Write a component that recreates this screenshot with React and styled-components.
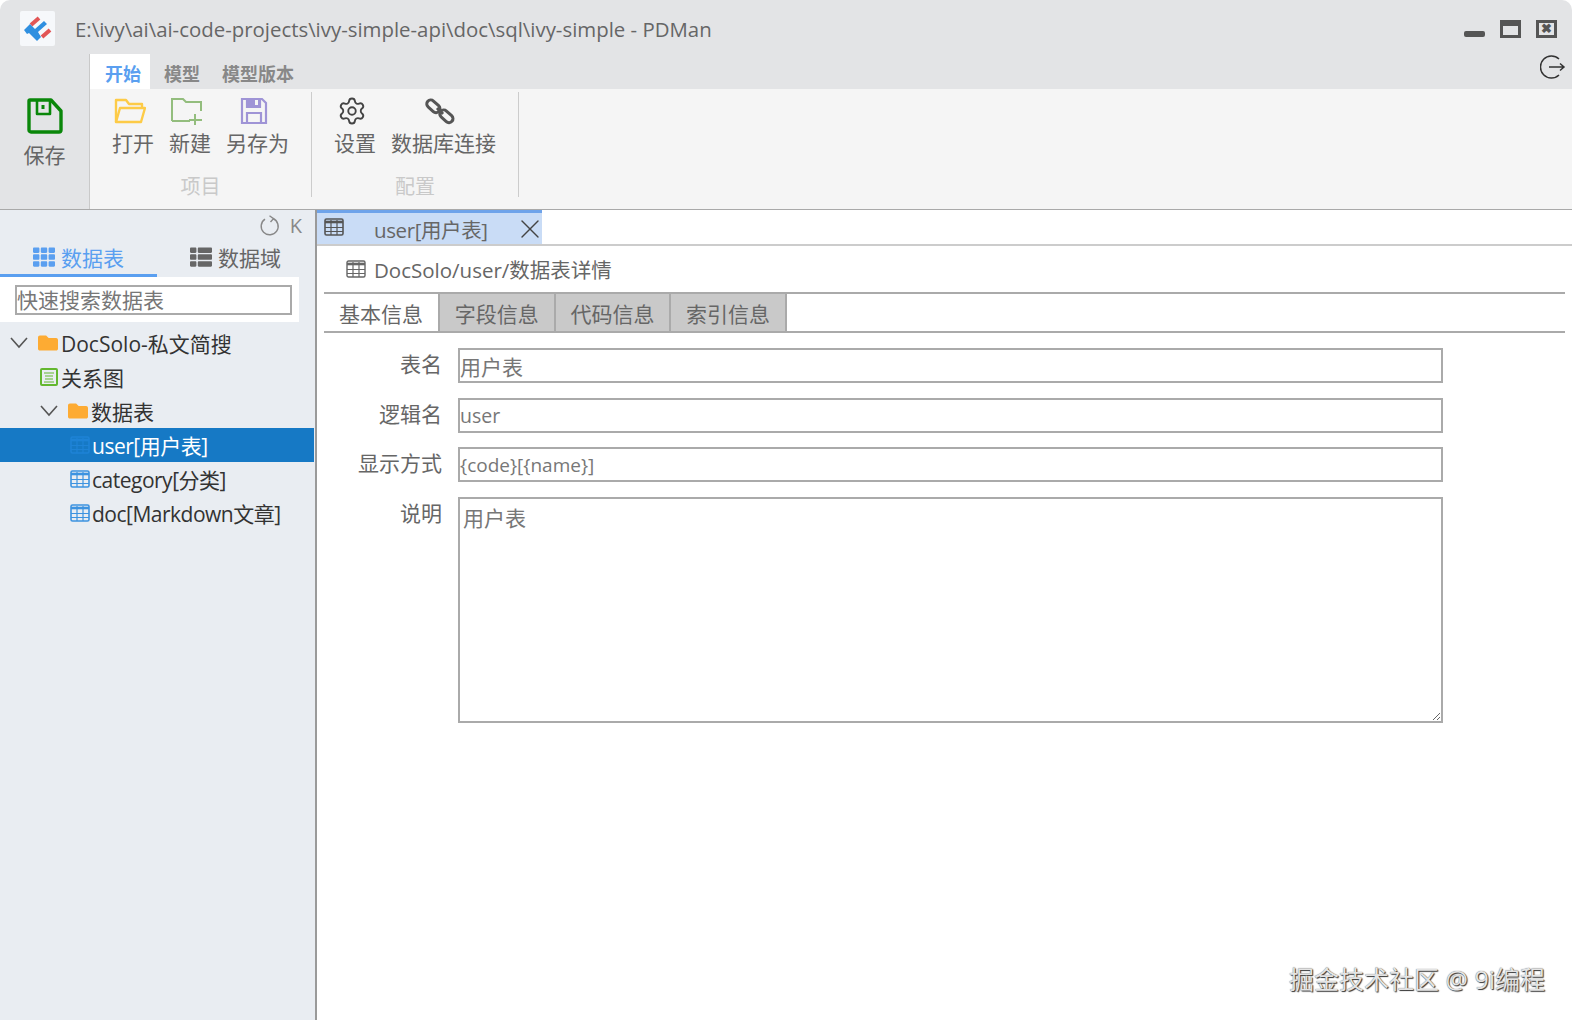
import React from "react";
import styled, { createGlobalStyle } from "styled-components";
import { Settings, X } from "lucide-react";
import { FaFolder, FaTh, FaThList } from "react-icons/fa";

const FONT = `"Open Sans", "Noto Sans CJK SC", sans-serif`;

const GlobalStyle = createGlobalStyle`
  * { box-sizing: border-box; }
  html, body { margin: 0; padding: 0; background: #fff; }
  body { font-family: ${FONT}; overflow: hidden; }
`;

const LogoIcon = () => (
  <svg width="35" height="35" viewBox="0 0 35 35">
    <rect width="35" height="35" rx="2" fill="#f6f8fb" />
    <path d="M11 14 L19 7" stroke="#e25555" strokeWidth="4" />
    <path d="M22 26 L30 19" stroke="#e25555" strokeWidth="4" />
    <path d="M4 19 L10 13 L15 18 L24 10 L27 13 L18 21 L21 26 L17 30 L9 22 L7 23 Z" fill="#2f8fe0" />
  </svg>
);

const SaveIcon = () => (
  <svg width="36" height="36" viewBox="0 0 36 36" fill="none" stroke="#0a870a" strokeWidth="3.4" strokeLinejoin="round">
    <path d="M3 2 H24 L34 13 V32 a2 2 0 0 1 -2 2 H4 a2 2 0 0 1 -2 -2 V3 a1 1 0 0 1 1 -1 Z" />
    <path d="M10 2 V16 H23 V2" strokeWidth="2.6" />
    <path d="M16 7 V11" strokeWidth="3" />
  </svg>
);

const OpenIcon = () => (
  <svg width="32" height="28" viewBox="0 0 32 28" fill="none" stroke="#fdcb47" strokeWidth="2.4" strokeLinejoin="round">
    <path d="M2 25 V3 H12 L15 7 H28 V11" />
    <path d="M2 25 L6 11 H31 L27 25 Z" />
  </svg>
);

const NewIcon = () => (
  <svg width="32" height="28" viewBox="0 0 32 28" fill="none" stroke="#93bd7d" strokeWidth="2">
    <path d="M1 24 V2 H12 L15 5 H30 V14" />
    <path d="M1 24 H19" />
    <path d="M24 17 V28 M18 23 H31" />
  </svg>
);

const SaveAsIcon = () => (
  <svg width="28" height="28" viewBox="0 0 28 28" fill="none" stroke="#9f94d6" strokeWidth="2.2">
    <path d="M2 2 H22 L26 6 V26 H2 Z" />
    <path d="M7 2 H20 V10 H7 Z" fill="#9f94d6" />
    <path d="M7 26 V16 H21 V26" />
    <rect x="15" y="3" width="3" height="5" fill="#f5f5f5" stroke="none" />
  </svg>
);

const LinkIcon = () => (
  <svg width="30" height="30" viewBox="0 0 30 30" fill="none" stroke="#555" strokeWidth="3">
    <rect x="1" y="6" width="15" height="8" rx="4" transform="rotate(42 8 10)" />
    <rect x="14" y="16" width="15" height="8" rx="4" transform="rotate(42 21 20)" />
    <path d="M12 12 L18 18" />
  </svg>
);

const ExitIcon = () => (
  <svg width="26" height="26" viewBox="0 0 26 26" fill="none" stroke="#333" strokeWidth="1.5">
    <path d="M19 5 A11 11 0 1 0 19 21" />
    <path d="M9 13 H24 M20 9.5 L24 13 L20 16.5" />
  </svg>
);

const DiagramIcon = () => (
  <svg width="18" height="18" viewBox="0 0 18 18" fill="none" stroke="#63b72f" strokeWidth="2">
    <rect x="1" y="1" width="16" height="16" rx="1" />
    <path d="M4 5 H14 M5 8 H13 M5 11 H13 M4 14 H14" strokeWidth="1" />
  </svg>
);

const TableIcon = ({ width = 20, height = 18, weight = 1.6 }) => (
  <svg width={width} height={height} viewBox="0 0 20 18" fill="none" stroke="currentColor" strokeWidth={weight}>
    <rect x="1" y="1" width="18" height="16" rx="1.5" />
    <path d="M1 4 H19" strokeWidth="2.6" />
    <path d="M1 9.5 H19 M1 13.5 H19 M7 2 V17 M13 2 V17" strokeWidth="1.2" />
  </svg>
);

const TreeChevron = () => (
  <TreeArrow width="18" height="20" viewBox="0 0 18 20" fill="none" stroke="#555" strokeWidth="1.6">
    <path d="M1 5 L9 14 L17 5" />
  </TreeArrow>
);

const RefreshIcon = () => (
  <svg width="22" height="22" viewBox="0 0 22 22" fill="none" stroke="#888" strokeWidth="1.4">
    <path d="M14 3.5 A8.5 8.5 0 1 1 6 4.2" />
    <path d="M10.5 0.8 L14.5 3.6 L11.5 7" />
  </svg>
);

const App = styled.div`
  position: relative;
  display: flex;
  flex-direction: column;
  width: 1572px;
  height: 1020px;
  overflow: hidden;
  border-radius: 10px 10px 0 0;
  background: #fff;
  font-family: ${FONT};
`;

const Header = styled.header`
  flex: none;
  height: 210px;
  border-bottom: 1px solid #a9a9a9;
  background: #e3e4e6;
`;

const TitleBar = styled.div`
  display: flex;
  align-items: center;
  height: 54px;
  padding: 3px 15px 0 20px;
`;

const Title = styled.div`
  flex: 1;
  margin-left: 20px;
  color: #666;
  font-size: 20.4px;
  white-space: nowrap;
`;

const WindowButtons = styled.div`
  display: flex;
  align-items: center;
  gap: 15px;
`;

const MinButton = styled.span`
  margin-top: 10px;
  border-radius: 2px;
  background: #555;
  width: 21px;
  height: 6px;
`;

const MaxButton = styled.span`
  border: 3px solid #555;
  border-top-width: 6px;
  width: 21px;
  height: 18px;
`;

const CloseButton = styled.span`
  display: flex;
  align-items: center;
  justify-content: center;
  border: 3px solid #555;
  width: 21px;
  height: 18px;
  color: #555;
  font-size: 13px;
  font-weight: 700;
  line-height: 1;
`;

const RibbonWrap = styled.div`
  display: flex;
  height: 155px;
`;

const SaveColumn = styled.div`
  display: flex;
  flex: none;
  flex-direction: column;
  align-items: center;
  border-right: 1px solid #c9c9c9;
  width: 90px;
  padding-top: 44px;
  color: #666;
  font-size: 21px;
  line-height: 30px;
`;

const SaveLabel = styled.span`
  margin-top: 6px;
`;

const RibbonBody = styled.div`
  display: flex;
  flex: 1;
  flex-direction: column;
`;

const RibbonTabs = styled.div`
  display: flex;
  position: relative;
  align-items: center;
  height: 35px;
`;

const RibbonTab = styled.div`
  display: flex;
  align-items: center;
  justify-content: center;
  background: ${(p) => (p.$active ? "#fff" : "transparent")};
  padding: ${(p) => (p.$active ? "2px 9px 0 15px" : "2px 0 0")};
  margin-right: ${(p) => (p.$active ? "14px" : "22px")};
  height: 35px;
  color: ${(p) => (p.$active ? "#5a9ff0" : "#888")};
  font-size: 18px;
  font-weight: 700;
`;

const ExitButton = styled.span`
  display: flex;
  position: absolute;
  top: 0;
  right: 6px;
`;

const Ribbon = styled.div`
  display: flex;
  flex: 1;
  background: #f5f5f5;
`;

const RibbonGroup = styled.div`
  display: flex;
  flex-direction: column;
  margin: 3px 0 12px;
  border-right: 1px solid #ccc;
  padding: 0 22px;
`;

const GroupItems = styled.div`
  display: flex;
  flex: 1;
  gap: 15px;
`;

const GroupTitle = styled.div`
  margin-bottom: -4px;
  color: #c9c9c9;
  font-size: 20px;
  line-height: 28px;
  text-align: center;
`;

const RibbonItem = styled.div`
  display: flex;
  flex-direction: column;
  align-items: center;
  color: #666;
  font-size: 21px;
  line-height: 30px;
  white-space: nowrap;
`;

const ItemIcon = styled.div`
  display: flex;
  align-items: center;
  justify-content: center;
  height: 35px;
  margin-top: 1px;
  padding-right: 7px;
`;

const Workspace = styled.div`
  display: flex;
  flex: 1;
  min-height: 0;
`;

const Sidebar = styled.aside`
  display: flex;
  flex: none;
  flex-direction: column;
  border-right: 2px solid #9a9a9a;
  background: #e9edf2;
  width: 317px;
`;

const SideTools = styled.div`
  display: flex;
  align-items: center;
  justify-content: flex-end;
  gap: 9px;
  height: 30px;
  padding: 1px 13px 0 0;
  color: #888;
  font-size: 20px;
`;

const SideTabs = styled.div`
  display: flex;
  height: 37px;
`;

const SideTab = styled.div`
  display: flex;
  align-items: center;
  justify-content: center;
  gap: 6px;
  border-bottom: 3px solid ${(p) => (p.$active ? "#5a9ff0" : "transparent")};
  width: 157px;
  padding-bottom: 1px;
  color: ${(p) => (p.$active ? "#5a9ff0" : "#666")};
  font-size: 21px;
`;

const SearchPanel = styled.div`
  background: #fff;
  width: 299px;
  padding: 8px 7px 7px 15px;
`;

const SearchInput = styled.input`
  display: block;
  outline: none;
  border: 2px solid #aaa;
  background: #fff;
  width: 277px;
  height: 30px;
  padding: 0;
  font-family: ${FONT};
  font-size: 21px;

  &::placeholder {
    color: #777;
    opacity: 1;
  }
`;

const Tree = styled.div`
  padding-top: 4px;
`;

const TreeRow = styled.div`
  display: flex;
  align-items: center;
  background: ${(p) => (p.$selected ? "#1679c5" : "transparent")};
  width: 314px;
  height: 34px;
  padding-left: ${(p) => p.$indent}px;
  color: ${(p) => (p.$selected ? "#fff" : "#333")};
  font-size: 21px;
  letter-spacing: ${(p) => (p.$tight ? "-0.5px" : "0")};
  white-space: nowrap;
`;

const TreeArrow = styled.svg`
  flex: none;
  margin-right: 10px;
`;

const TreeIcon = styled.span`
  display: flex;
  flex: none;
  margin-right: ${(p) => (p.$tight ? "2px" : "3px")};
  color: ${(p) => p.$color};
`;

const Main = styled.main`
  display: flex;
  flex: 1;
  flex-direction: column;
  min-width: 0;
`;

const DocTabs = styled.div`
  flex: none;
  height: 36px;
  border-bottom: 2px solid #ccc;
`;

const DocTab = styled.div`
  display: flex;
  align-items: center;
  border-top: 3px solid #6ea3ea;
  background: #c9dcf6;
  width: 225px;
  height: 34px;
  padding: 0 0 0 7px;
  color: #666;
  font-size: 20.5px;
  letter-spacing: -0.4px;
`;

const DocTabIcon = styled.span`
  display: flex;
  margin-top: -4px;
  color: #555;
`;

const DocTabLabel = styled.span`
  flex: 1;
  padding-left: 30px;
`;

const DocTabClose = styled(X)`
  flex: none;
  margin-right: -4px;
  color: #444;
`;

const Detail = styled.div`
  padding: 0 7px;
`;

const Breadcrumb = styled.div`
  display: flex;
  align-items: center;
  gap: 8px;
  height: 46px;
  padding-left: 22px;
  color: #666;
  font-size: 20.5px;
`;

const SubTabs = styled.div`
  display: flex;
  border-top: 2px solid #aaa;
  border-bottom: 2px solid #aaa;
  height: 41px;
`;

const SubTab = styled.div`
  display: flex;
  align-items: center;
  justify-content: center;
  border-right: 2px solid #aaa;
  background: ${(p) => (p.$active ? "#fff" : "#c9c9c9")};
  width: ${(p) => (p.$active ? "116px" : "115.6px")};
  color: #666;
  font-size: 21px;
`;

const Form = styled.div`
  display: grid;
  grid-template-columns: 118px 985px;
  row-gap: 14.5px;
  column-gap: 16px;
  padding-top: 15px;
`;

const FieldLabel = styled.label`
  height: 35px;
  color: #666;
  font-size: 21px;
  line-height: 32px;
  text-align: right;
`;

const FieldInput = styled.input`
  display: block;
  outline: none;
  border: 2px solid #aaa;
  background: #fff;
  width: 100%;
  height: 35px;
  padding: 1px 0 0;
  color: #777;
  font-family: ${FONT};
  font-size: ${(p) => p.$size}px;
`;

const FieldArea = styled.textarea`
  display: block;
  outline: none;
  border: 2px solid #aaa;
  background: #fff;
  width: 100%;
  height: 226px;
  padding: 3px;
  resize: both;
  color: #777;
  font-family: ${FONT};
  font-size: 21px;
`;

const Watermark = styled.div`
  position: absolute;
  right: 27px;
  bottom: 26px;
  color: #e4e4e4;
  font-size: 25px;
  line-height: 30px;
  text-shadow: 1px 1px 1px #333, 0 0 1px #555;
  white-space: nowrap;
`;

const ribbonGroups = [
  {
    title: "项目",
    items: [
      { label: "打开", icon: <OpenIcon /> },
      { label: "新建", icon: <NewIcon /> },
      { label: "另存为", icon: <SaveAsIcon /> },
    ],
  },
  {
    title: "配置",
    items: [
      { label: "设置", icon: <Settings size={30} strokeWidth={1.5} color="#444" /> },
      { label: "数据库连接", icon: <LinkIcon /> },
    ],
  },
];

const fields = [
  { label: "表名", value: "用户表", size: 21 },
  { label: "逻辑名", value: "user", size: 19.5 },
  { label: "显示方式", value: "{code}[{name}]", size: 19 },
];

export default function PdmanPage() {
  return (
    <App>
      <GlobalStyle />
      <Header>
        <TitleBar>
          <LogoIcon />
          <Title>E:\ivy\ai\ai-code-projects\ivy-simple-api\doc\sql\ivy-simple - PDMan</Title>
          <WindowButtons>
            <MinButton />
            <MaxButton />
            <CloseButton>✖</CloseButton>
          </WindowButtons>
        </TitleBar>
        <RibbonWrap>
          <SaveColumn>
            <SaveIcon />
            <SaveLabel>保存</SaveLabel>
          </SaveColumn>
          <RibbonBody>
            <RibbonTabs>
              <RibbonTab $active>开始</RibbonTab>
              <RibbonTab>模型</RibbonTab>
              <RibbonTab>模型版本</RibbonTab>
              <ExitButton>
                <ExitIcon />
              </ExitButton>
            </RibbonTabs>
            <Ribbon>
              {ribbonGroups.map((group) => (
                <RibbonGroup key={group.title}>
                  <GroupItems>
                    {group.items.map((item) => (
                      <RibbonItem key={item.label}>
                        <ItemIcon>{item.icon}</ItemIcon>
                        {item.label}
                      </RibbonItem>
                    ))}
                  </GroupItems>
                  <GroupTitle>{group.title}</GroupTitle>
                </RibbonGroup>
              ))}
            </Ribbon>
          </RibbonBody>
        </RibbonWrap>
      </Header>
      <Workspace>
        <Sidebar>
          <SideTools>
            <RefreshIcon />
            <span>K</span>
          </SideTools>
          <SideTabs>
            <SideTab $active>
              <FaTh size={22} />
              数据表
            </SideTab>
            <SideTab>
              <FaThList size={22} />
              数据域
            </SideTab>
          </SideTabs>
          <SearchPanel>
            <SearchInput placeholder="快速搜索数据表" />
          </SearchPanel>
          <Tree>
            <TreeRow $indent={10}>
              <TreeChevron />
              <TreeIcon $color="#fdab33">
                <FaFolder size={20} />
              </TreeIcon>
              DocSolo-私文简搜
            </TreeRow>
            <TreeRow $indent={40}>
              <TreeIcon $color="#63b72f">
                <DiagramIcon />
              </TreeIcon>
              关系图
            </TreeRow>
            <TreeRow $indent={40}>
              <TreeChevron />
              <TreeIcon $color="#fdab33">
                <FaFolder size={20} />
              </TreeIcon>
              数据表
            </TreeRow>
            <TreeRow $indent={70} $selected $tight>
              <TreeIcon $color="#1e83d6" $tight>
                <TableIcon />
              </TreeIcon>
              user[用户表]
            </TreeRow>
            <TreeRow $indent={70} $tight>
              <TreeIcon $color="#3d93e0" $tight>
                <TableIcon />
              </TreeIcon>
              category[分类]
            </TreeRow>
            <TreeRow $indent={70} $tight>
              <TreeIcon $color="#3d93e0" $tight>
                <TableIcon />
              </TreeIcon>
              doc[Markdown文章]
            </TreeRow>
          </Tree>
        </Sidebar>
        <Main>
          <DocTabs>
            <DocTab>
              <DocTabIcon>
                <TableIcon />
              </DocTabIcon>
              <DocTabLabel>user[用户表]</DocTabLabel>
              <DocTabClose size={32} strokeWidth={1} />
            </DocTab>
          </DocTabs>
          <Detail>
            <Breadcrumb>
              <TableIcon weight={1.4} />
              DocSolo/user/数据表详情
            </Breadcrumb>
            <SubTabs>
              <SubTab $active>基本信息</SubTab>
              <SubTab>字段信息</SubTab>
              <SubTab>代码信息</SubTab>
              <SubTab>索引信息</SubTab>
            </SubTabs>
            <Form>
              {fields.map((field) => (
                <React.Fragment key={field.label}>
                  <FieldLabel>{field.label}</FieldLabel>
                  <FieldInput defaultValue={field.value} $size={field.size} />
                </React.Fragment>
              ))}
              <FieldLabel>说明</FieldLabel>
              <FieldArea defaultValue="用户表" />
            </Form>
          </Detail>
        </Main>
      </Workspace>
      <Watermark>掘金技术社区 @ 9i编程</Watermark>
    </App>
  );
}
